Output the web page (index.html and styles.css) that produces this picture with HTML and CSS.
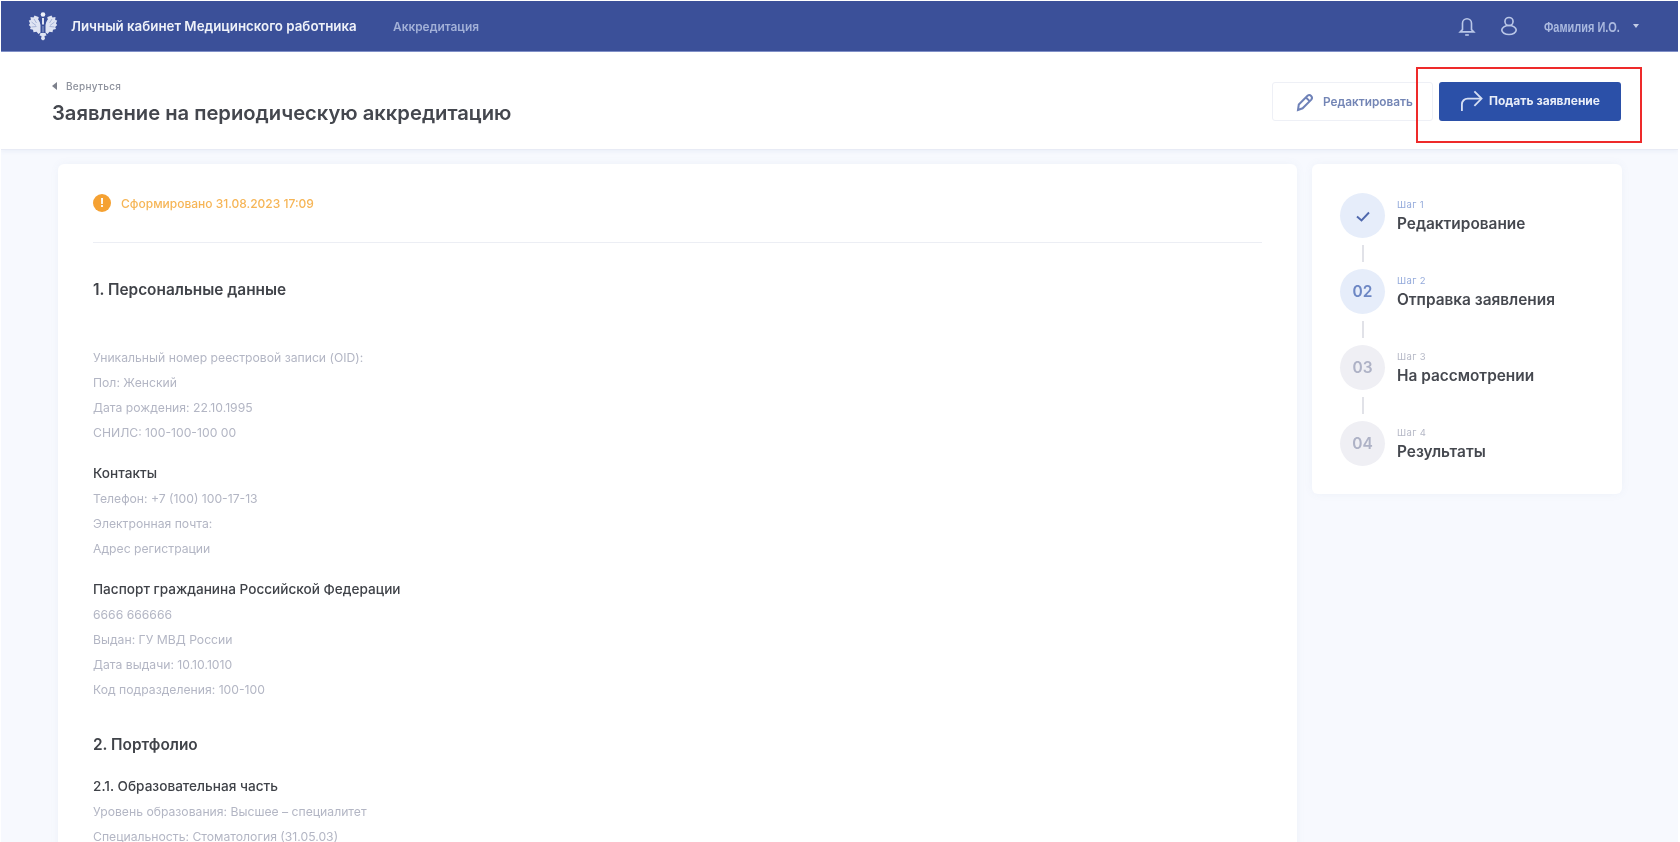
FILE: index.html
```html
<!DOCTYPE html>
<html lang="ru">
<head>
<meta charset="utf-8">
<title>Заявление на периодическую аккредитацию</title>
<link rel="stylesheet" href="styles.css">
</head>
<body>
<div class="page">
  <header class="topbar">
    <div class="brand">
      <svg class="logo" viewBox="0 0 30 30" aria-hidden="true">
        <path fill="#dfe4f3" d="M10.500 6 6.500 4.500 5.500 6.500 2.500 6 2.800 9 .8 9.500 2 12.500.8 14l2 2-.8 2 3 .8.500 2.400 3-.5 2 2.300 2-1.500V14z"/>
        <path fill="#dfe4f3" d="M19.500 6l4-1.500 1 2L27.500 6l-.3 3 2 .5L28 12.500l1.200 1.500-2 2 .8 2-3 .8-.5 2.400-3-.5-2 2.300-2-1.500V14z"/>
        <path fill="#dfe4f3" d="M12.500 22h5l1 2.500-2 .5.500 3-2 1.500-2-1.500.500-3-2-.5z"/>
        <circle cx="15" cy="3.500" r="2.300" fill="#eef1f9"/>
        <path fill="none" stroke="#8f9fcc" stroke-width=".7" d="M6 8l2.500 4M3.500 11l4.500 3.500M3.500 16l5-.5M24 8l-2.500 4M26.500 11 22 14.500M26.500 16l-5-.5"/>
        <path fill="none" stroke="#3b5099" stroke-width="1.500" d="M10.500 7.500 15 14l4.500-6.500"/>
        <path fill="#6b7db5" d="M14 15h2v6.500h-2z"/>
        <path fill="#f2f4fb" d="M14.100 7h1.800v6.500h-1.800z"/>
      </svg>
      <span class="brand-name">Личный кабинет Медицинского работника</span>
      <span class="brand-link">Аккредитация</span>
    </div>
    <div class="user">
      <svg class="bell-icon" viewBox="0 0 20 22" fill="none" stroke="#bac7e8" stroke-width="1.800" aria-hidden="true">
        <path d="M2.500 17.500h15l-2.500-2.500V8a5 5 0 0 0-10 0v7z"/><path d="M8 21h4"/>
      </svg>
      <svg class="person-icon" viewBox="0 0 20 22" fill="none" stroke="#bac7e8" stroke-width="1.800" aria-hidden="true">
        <circle cx="10" cy="6" r="4.500"/><ellipse cx="10" cy="15.500" rx="8" ry="5"/>
      </svg>
      <span class="user-name">Фамилия И.О.</span>
      <span class="caret"></span>
    </div>
  </header>

  <section class="pagehead">
    <div>
      <div class="back"><span class="back-arrow"></span>Вернуться</div>
      <h1 class="title">Заявление на периодическую аккредитацию</h1>
    </div>
    <div class="actions">
      <button class="btn btn-edit">
        <svg class="btn-icon" viewBox="0 0 20 20" fill="none" stroke="#6f82b8" stroke-width="2" aria-hidden="true">
          <path d="M3 18l.8-5.500L12.500 3.800a2.700 2.700 0 0 1 3.800 3.800L7.600 16.300z"/><path d="M11 5.500l3.600 3.600"/>
        </svg>
        Редактировать
      </button>
      <div class="highlight">
        <button class="btn btn-submit">
          <svg class="btn-icon-lg" viewBox="0 0 24 24" fill="none" stroke="#d5def3" stroke-width="1.900" aria-hidden="true">
            <path d="M2 23v-7a6 6 0 0 1 6-6h14"/><path d="M15 2.500 22.500 10 15 17.500"/>
          </svg>
          Подать заявление
        </button>
      </div>
    </div>
  </section>

  <main class="content">
    <article class="card doc">
      <div class="status">
        <span class="status-icon">!</span>
        <span>Сформировано 31.08.2023 17:09</span>
      </div>
      <h2 class="h-section first">1. Персональные данные</h2>
      <div class="group first-group">
        <p class="row">Уникальный номер реестровой записи (OID):</p>
        <p class="row">Пол: Женский</p>
        <p class="row">Дата рождения: 22.10.1995</p>
        <p class="row">СНИЛС: 100-100-100 00</p>
      </div>
      <div class="group">
        <h3 class="h-sub">Контакты</h3>
        <p class="row">Телефон: +7 (100) 100-17-13</p>
        <p class="row">Электронная почта:</p>
        <p class="row">Адрес регистрации</p>
      </div>
      <div class="group">
        <h3 class="h-sub">Паспорт гражданина Российской Федерации</h3>
        <p class="row">6666 666666</p>
        <p class="row">Выдан: ГУ МВД России</p>
        <p class="row">Дата выдачи: 10.10.1010</p>
        <p class="row">Код подразделения: 100-100</p>
      </div>
      <h2 class="h-section second">2. Портфолио</h2>
      <div class="group tight">
        <h3 class="h-sub">2.1. Образовательная часть</h3>
        <p class="row">Уровень образования: Высшее – специалитет</p>
        <p class="row">Специальность: Стоматология (31.05.03)</p>
      </div>
    </article>

    <aside class="card steps">
      <div class="step active">
        <div class="step-dot">
          <svg class="check" viewBox="0 0 16 16" fill="none" stroke="#4f68ad" stroke-width="1.900" aria-hidden="true"><path d="M2 8.500 6.500 12.500l7.500-8"/></svg>
        </div>
        <div><div class="step-label">Шаг 1</div><div class="step-name">Редактирование</div></div>
      </div>
      <div class="step-line"></div>
      <div class="step active">
        <div class="step-dot">02</div>
        <div><div class="step-label">Шаг 2</div><div class="step-name">Отправка заявления</div></div>
      </div>
      <div class="step-line"></div>
      <div class="step">
        <div class="step-dot">03</div>
        <div><div class="step-label">Шаг 3</div><div class="step-name">На рассмотрении</div></div>
      </div>
      <div class="step-line"></div>
      <div class="step">
        <div class="step-dot">04</div>
        <div><div class="step-label">Шаг 4</div><div class="step-name">Результаты</div></div>
      </div>
    </aside>
  </main>
</div>
</body>
</html>
```

FILE: styles.css
```css
* { box-sizing: border-box; }
html, body { margin: 0; height: 100%; overflow: hidden; background: #fff; }
body { font-family: Inter, "Noto Sans", sans-serif; color: #3a3d45; }
p, h1, h2, h3 { margin: 0; }

.page {
  height: 842px;
  margin: 1px 2px 0 1px;
  background: #f7f9fe;
  overflow: hidden;
  filter: blur(0.7px);
}

.topbar {
  height: 51px;
  background: #3b5099;
  border-bottom: 1px solid #7f90c8;
  display: flex;
  align-items: center;
  justify-content: space-between;
  padding: 0 39px 0 27px;
}
.brand { display: flex; align-items: center; }
.logo { width: 30px; height: 30px; margin-right: 13px; }
.brand-name { color: #eef1f9; font-size: 13.300px; font-weight: 600; width: 322px; white-space: nowrap; }
.brand-link { color: #a3b1d8; font-size: 11.900px; font-weight: 600; }
.user { display: flex; align-items: center; }
.bell-icon { width: 18px; height: 20px; margin-right: 24px; }
.person-icon { width: 18px; height: 20px; margin-right: 26px; }
.user-name {
  display: block;
  width: 79px;
  color: #aab9df;
  font-family: "Liberation Sans", sans-serif;
  font-size: 15px;
  font-weight: 700;
  white-space: nowrap;
  transform: scaleX(0.73);
  transform-origin: left center;
}
.caret {
  margin-left: 10px;
  width: 0;
  height: 0;
  border: 3.500px solid transparent;
  border-top: 4px solid #c3cce6;
  border-bottom: 0;
}

.pagehead {
  height: 98px;
  background: #fff;
  border-bottom: 1px solid #e8ebf5;
  box-shadow: 0 2px 4px rgba(120, 135, 190, 0.08);
  display: flex;
  align-items: flex-start;
  justify-content: space-between;
  padding: 28px 36px 0 51px;
}
.back { display: flex; align-items: center; font-size: 10px; font-weight: 500; color: #8d919c; height: 12px; letter-spacing: .3px; }
.back-arrow {
  width: 0;
  height: 0;
  margin-right: 9px;
  border: 4px solid transparent;
  border-right: 5px solid #7d818c;
  border-left: 0;
}
.title { margin-top: 7px; font-size: 20.200px; line-height: 28px; font-weight: 600; color: #44474e; }
.actions { display: flex; align-items: flex-start; margin-top: -13px; }
.btn {
  display: flex;
  align-items: center;
  height: 39px;
  border-radius: 3px;
  font-family: inherit;
  font-size: 11.800px;
  font-weight: 700;
  padding: 0;
  white-space: nowrap;
}
.btn-edit {
  width: 161px;
  padding-left: 22px;
  background: #fff;
  border: 1px solid #eef0f6;
  color: #7385b5;
  margin: 15px -17px 0 0;
  font-weight: 600;
}
.btn-icon { width: 20px; height: 20px; margin-right: 8px; }
.btn-icon-lg { width: 23px; height: 23px; margin-right: 6px; }
.highlight {
  position: relative;
  border: 2px solid #ee2a2a;
  padding: 13px 19px 20px 21px;
  height: 76px;
  width: 226px;
}
.btn-submit {
  width: 182px;
  padding: 0 0 2px 21px;
  background: #2b50a8;
  border: 0;
  color: #e8edf8;
  font-size: 12px;
}

.content {
  display: flex;
  align-items: flex-start;
  gap: 15px;
  padding: 14px 0 0 57px;
}
.card {
  background: #fff;
  border-radius: 6px;
  box-shadow: 0 0 8px rgba(120, 135, 190, 0.07);
}
.doc {
  width: 1239px;
  height: 760px;
  padding: 0 35px;
}
.status {
  height: 79px;
  display: flex;
  align-items: center;
  border-bottom: 1px solid #eceef4;
  color: #f6b556;
  font-size: 12px;
  font-weight: 500;
}
.status-icon {
  width: 18px;
  height: 18px;
  border-radius: 50%;
  margin: 0 10px 0 0;
  background: #f5a132;
  color: #fff;
  font-size: 12px;
  font-weight: 700;
  line-height: 18px;
  text-align: center;
}
.h-section { font-size: 15.400px; font-weight: 600; line-height: 22px; color: #404349; }
.h-section.first { margin-top: 36px; }
.h-section.second { margin-top: 32px; }
.group { margin-top: 16px; }
.group.first-group { margin-top: 44px; }
.group.tight { margin-top: 18px; }
.h-sub { font-size: 13.600px; font-weight: 500; line-height: 25px; color: #3f4248; }
.row { font-size: 12.200px; line-height: 25px; color: #b3b6c4; }

.steps {
  width: 310px;
  height: 330px;
  padding: 29px 0 0 28px;
}
.step { display: flex; align-items: center; gap: 12px; height: 45px; }
.step-dot {
  flex: none;
  width: 45px;
  height: 45px;
  border-radius: 50%;
  display: flex;
  align-items: center;
  justify-content: center;
  background: #efeff4;
  color: #aeb2c6;
  font-size: 15.500px;
  font-weight: 600;
}
.active .step-dot { background: #e6edfa; color: #6d87c4; }
.check { width: 16px; height: 16px; }
.step-label { font-size: 9.500px; line-height: 13px; letter-spacing: .4px; color: #b5b8c6; }
.active .step-label { color: #94aadb; }
.step-name { margin-top: 3px; font-size: 15.400px; line-height: 20px; font-weight: 600; color: #45484f; }
.step-line {
  width: 2px;
  height: 17px;
  margin: 7px 0 7px 21.500px;
  background: #e1e2e8;
}
```
